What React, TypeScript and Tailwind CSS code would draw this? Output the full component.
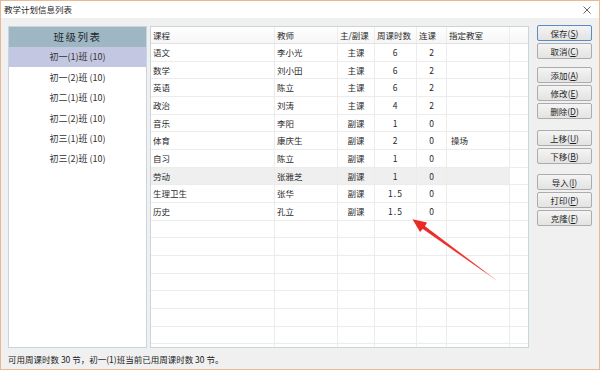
import React from 'react';

const FONT = { fontFamily: '"Noto Sans CJK SC", "Noto Sans", sans-serif' };

const classes = ['初一(1)班 (10)', '初一(2)班 (10)', '初二(1)班 (10)', '初二(2)班 (10)', '初三(1)班 (10)', '初三(2)班 (10)'];

const rows = [
  { course: '语文', teacher: '李小光', type: '主课', hours: '6', link: '2', room: '' },
  { course: '数学', teacher: '刘小田', type: '主课', hours: '6', link: '2', room: '' },
  { course: '英语', teacher: '陈立', type: '主课', hours: '6', link: '2', room: '' },
  { course: '政治', teacher: '刘涛', type: '主课', hours: '4', link: '2', room: '' },
  { course: '音乐', teacher: '李阳', type: '副课', hours: '1', link: '0', room: '' },
  { course: '体育', teacher: '康庆生', type: '副课', hours: '2', link: '0', room: '操场' },
  { course: '自习', teacher: '陈立', type: '副课', hours: '1', link: '0', room: '' },
  { course: '劳动', teacher: '张雅芝', type: '副课', hours: '1', link: '0', room: '' },
  { course: '生理卫生', teacher: '张华', type: '副课', hours: '1.5', link: '0', room: '' },
  { course: '历史', teacher: '孔立', type: '副课', hours: '1.5', link: '0', room: '' },
];

const buttonGroups = [
  [{ t: '保存', k: 'S' }, { t: '取消', k: 'C' }],
  [{ t: '添加', k: 'A' }, { t: '修改', k: 'E' }, { t: '删除', k: 'D' }],
  [{ t: '上移', k: 'U' }, { t: '下移', k: 'B' }],
  [{ t: '导入', k: 'I' }, { t: '打印', k: 'P' }, { t: '克隆', k: 'F' }],
];

const cols = 'grid grid-cols-[124px_63px_37px_42px_30px_63px_1fr]';

export default function App() {
  const filler = Array.from({ length: 8 });

  return (
    <div className="relative w-[600px] h-[370px] flex flex-col bg-[#f0f0f0] border border-[#e9b894] text-[#1e1e1e] overflow-hidden" style={FONT}>
      {/* title bar */}
      <div className="h-[17px] shrink-0 bg-white flex items-center justify-between pl-[3px] pr-[8px] text-[8.5px]">
        <span>教学计划信息列表</span>
        <svg width="8" height="8" viewBox="0 0 8 8" className="text-[#555]">
          <path d="M0.5 0.5 L7.5 7.5 M7.5 0.5 L0.5 7.5" stroke="currentColor" strokeWidth="0.9" />
        </svg>
      </div>

      <div className="flex pt-[8px] pl-[7px]">
        {/* class list */}
        <div className="w-[139px] h-[322px] bg-white border border-[#c5d6e0] flex flex-col">
          <div className="h-[20px] shrink-0 bg-[#9fb6c3] flex items-center justify-center text-[10.5px] tracking-[1.5px] text-[#1e2a30]">班级列表</div>
          {classes.map((c, i) => (
            <div key={c} className={`h-[20.4px] shrink-0 flex items-center justify-center text-[9px] text-[#333] ${i === 0 ? 'bg-[#c4c7e1]' : ''}`}>
              {c}
            </div>
          ))}
        </div>

        {/* plan table */}
        <div className="ml-[3px] w-[379px] h-[322px] bg-white border border-[#c9d5dc] flex flex-col text-[8.5px] text-[#2a2a2a] overflow-hidden">
          <div className={`${cols} h-[17px] shrink-0 bg-gradient-to-b from-white to-[#f6f6f6] border-b border-[#e2e2e2]`}>
            <div className="pl-[2px] flex items-center border-r border-[#ededed]">课程</div>
            <div className="pl-[2px] flex items-center border-r border-[#ededed]">教师</div>
            <div className="pl-[2px] flex items-center border-r border-[#ededed]">主/副课</div>
            <div className="pl-[2px] flex items-center border-r border-[#ededed]">周课时数</div>
            <div className="pl-[2px] flex items-center border-r border-[#ededed]">连课</div>
            <div className="pl-[2px] flex items-center border-r border-[#ededed]">指定教室</div>
            <div />
          </div>
          {rows.map((r, i) => (
            <div key={r.course} className={`${cols} h-[17.67px] shrink-0 border-b border-[#ececec]`}>
              <div className={`pl-[2px] flex items-center border-r border-[#ececec] ${i === 7 ? 'bg-[#efefef]' : ''}`}>{r.course}</div>
              <div className={`pl-[2px] flex items-center border-r border-[#ececec] ${i === 7 ? 'bg-[#efefef]' : ''}`}>{r.teacher}</div>
              <div className={`flex items-center justify-center border-r border-[#ececec] ${i === 7 ? 'bg-[#efefef]' : ''}`}>{r.type}</div>
              <div className={`flex items-center justify-center border-r border-[#ececec] tracking-[1px] ${i === 7 ? 'bg-[#efefef]' : ''}`}>{r.hours}</div>
              <div className={`flex items-center justify-center border-r border-[#ececec] ${i === 7 ? 'bg-[#efefef]' : ''}`}>{r.link}</div>
              <div className={`pl-[4px] flex items-center border-r border-[#ececec] ${i === 7 ? 'bg-[#efefef]' : ''}`}>{r.room}</div>
              <div />
            </div>
          ))}
          {filler.map((_, i) => (
            <div key={i} className={`${cols} h-[17.67px] shrink-0 border-b border-[#ececec]`}>
              <div className="border-r border-[#ececec]" />
              <div className="border-r border-[#ececec]" />
              <div className="border-r border-[#ececec]" />
              <div className="border-r border-[#ececec]" />
              <div className="border-r border-[#ececec]" />
              <div className="border-r border-[#ececec]" />
              <div />
            </div>
          ))}
        </div>

        {/* buttons */}
        <div className="ml-[8px] -mt-[1px] flex flex-col w-[55px]">
          {buttonGroups.map((g, gi) => (
            <div key={gi} className={`flex flex-col gap-[2px] ${gi === 1 ? 'mt-[8px]' : gi === 2 ? 'mt-[11px]' : gi === 3 ? 'mt-[10px]' : ''}`}>
              {g.map((b, bi) => (
                <button
                  key={b.t}
                  className={`h-[16px] w-[55px] rounded-[2px] border bg-gradient-to-b from-[#f4f4f4] to-[#e3e3e3] text-[8.5px] leading-none flex items-center justify-center ${gi === 0 && bi === 0 ? 'border-[#5a8bc4]' : 'border-[#acacac]'}`}
                >
                  {b.t}(<span className="underline">{b.k}</span>)
                </button>
              ))}
            </div>
          ))}
        </div>
      </div>

      {/* status */}
      <div className="mt-[5px] pl-[7px] text-[8.5px] text-[#222]">可用周课时数 30 节，初一(1)班当前已用周课时数 30 节。</div>

      {/* annotation arrow */}
      <svg className="absolute left-0 top-0 pointer-events-none" width="600" height="370" viewBox="0 0 600 370">
        <defs>
          <linearGradient id="shaft" x1="422" y1="226" x2="495" y2="279" gradientUnits="userSpaceOnUse">
            <stop offset="0" stopColor="#ea2b25" />
            <stop offset="0.8" stopColor="#ee3b35" />
            <stop offset="1" stopColor="#f7a5a0" />
          </linearGradient>
        </defs>
        <polygon points="423.4,224.8 421.2,227.6 495.2,279.2 495.0,278.8" fill="url(#shaft)" />
        <polygon points="411.5,218.3 426.0,221.6 423.4,226.2 419.0,231.0" fill="#ea2b25" />
      </svg>
    </div>
  );
}
